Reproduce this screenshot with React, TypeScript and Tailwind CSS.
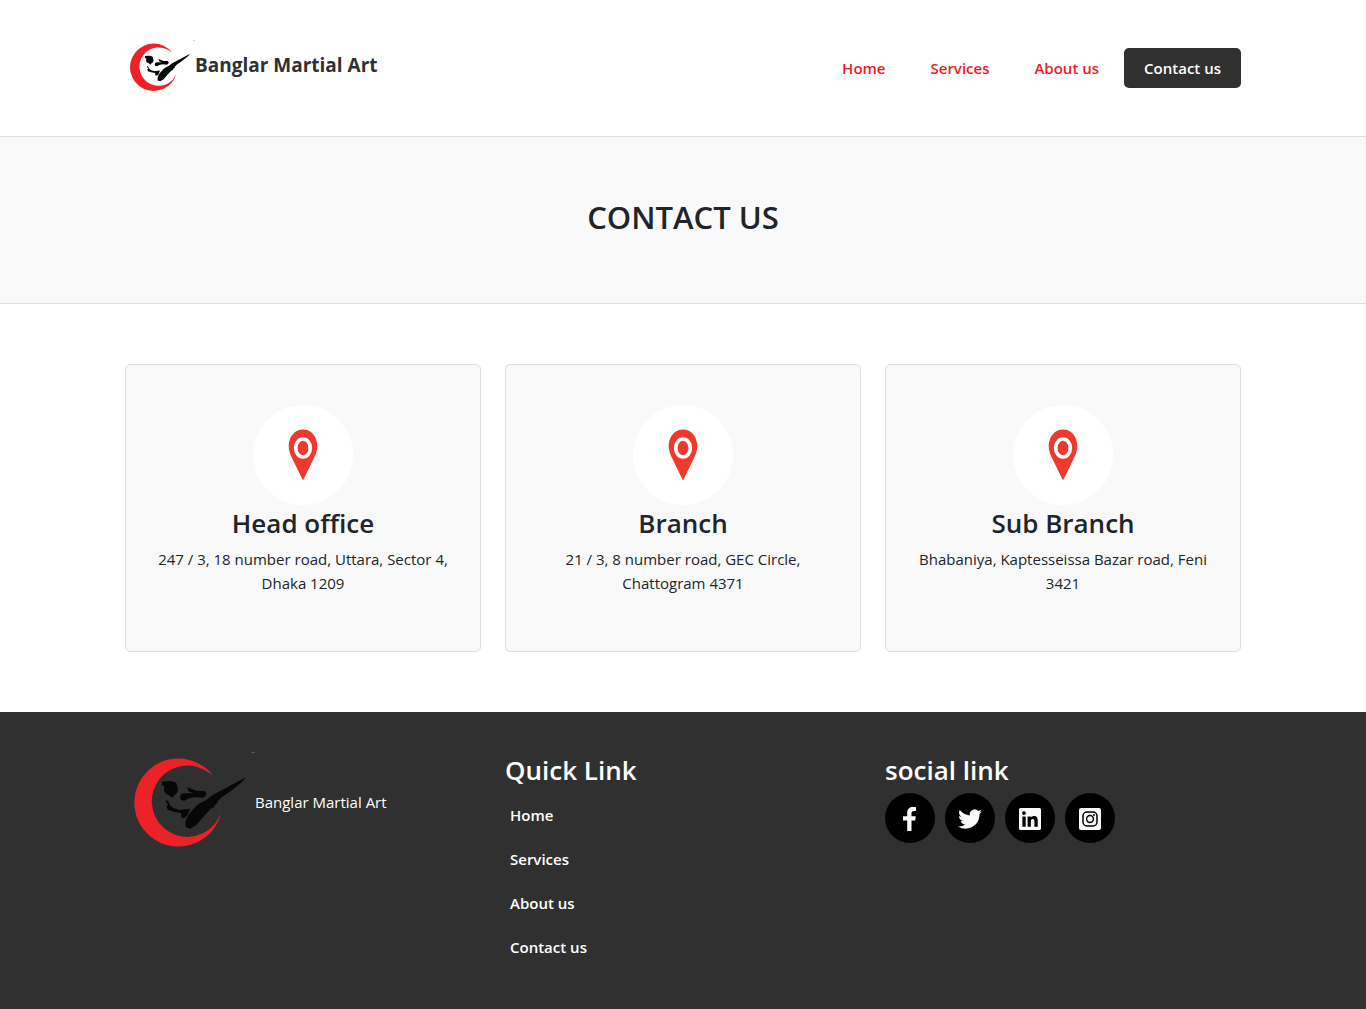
import type { ReactNode } from "react";

const navLinks = ["Home", "Services", "About us"];
const quickLinks = ["Home", "Services", "About us", "Contact us"];

const offices = [
  { name: "Head office", address: "247 / 3, 18 number road, Uttara, Sector 4, Dhaka 1209" },
  { name: "Branch", address: "21 / 3, 8 number road, GEC Circle, Chattogram 4371" },
  { name: "Sub Branch", address: "Bhabaniya, Kaptesseissa Bazar road, Feni 3421" },
];

function Logo({ className }: { className: string }) {
  return (
    <svg viewBox="0 21 390 300" className={className} aria-hidden="true">
      <path d="M263 90 A132 132 0 1 0 288 205 A107 107 0 1 1 217 66 Q243 74 263 90Z" fill="#ed2228" />
      <g fill="#050708">
        <path d="M112 110 L126 109 Q142 106 154 114 L157 123 L159 137 L154 146 L148 150 L141 159 L135 152 L124 148 L117 139 L118 124 L110 119Z" />
        <path d="M187 127 L201 132 L215 137 L238 138 L244 144 L242 152 L234 158 L209 156 L192 160 L178 167 L168 165 L165 157 L168 148 L179 145 L205 145 L190 139Z" />
        <path d="M122 164 L130 169 L135 181 L145 189 L164 195 L195 191 L190 205 L181 218 L169 218 L168 204 L146 200 L128 194 L124 183 L131 180 L124 174Z" />
        <path d="M363 97 L351 111 L323 134 L288 158 L276 171 L279 174 L268 181 L267 187 L259 190 L235 216 L214 240 L196 251 L182 246 L181 232 L188 213 L203 194 L219 178 L245 164 L263 150 L287 137 L326 116Z" />
      </g>
      <path d="M379 23H390" stroke="#777" strokeWidth="2" />
    </svg>
  );
}

function Pin() {
  return (
    <svg viewBox="0 0 30 52" className="h-[52px] w-[30px]" aria-hidden="true">
      <path d="M15 0.500 C6.500 0.500 0.700 8 0.700 17 C0.700 21 2 25 4 29 L15 51.500 L26 29 C28 25 29.300 21 29.300 17 C29.300 8 23.500 0.500 15 0.500Z" fill="#ee392f" />
      <ellipse cx="15" cy="19" rx="7.300" ry="9" fill="none" stroke="#fff" strokeWidth="3.700" />
    </svg>
  );
}

const socials: { label: string; icon: ReactNode }[] = [
  {
    label: "Facebook",
    icon: <path d="M13.500 24V13.500H17.200L17.800 9.200H13.500V6.500C13.500 5 14.100 4 16 4H18V0.300C17 0.100 16 0 15 0C11.500 0 9.200 2 9.200 5.800V9.200H5V13.500H9.200V24Z" />,
  },
  {
    label: "Twitter",
    icon: <path d="M24 4.600c-.9.400-1.800.7-2.800.8 1-.6 1.800-1.600 2.200-2.700-1 .6-2 1-3.100 1.200A4.920 4.920 0 0 0 11.900 8.400C7.800 8.200 4.100 6.200 1.700 3.100.4 5.300 1 8.200 3.200 9.700c-.8 0-1.600-.2-2.200-.6-.1 2.300 1.600 4.400 3.900 4.900-.7.200-1.500.2-2.200.1.600 2 2.400 3.400 4.600 3.400A9.900 9.900 0 0 1 0 19.500 14 14 0 0 0 7.500 21.700c9.100 0 14.300-7.700 14-14.600 1-.7 1.800-1.600 2.500-2.500Z" />,
  },
  {
    label: "LinkedIn",
    icon: (
      <path
        fillRule="evenodd"
        d="M2.500 1H21.500Q23 1 23 2.500V21.500Q23 23 21.500 23H2.500Q1 23 1 21.500V2.500Q1 1 2.500 1Z M4.400 9.400V19.700H7.700V9.400Z M6 4.200A1.900 1.900 0 1 0 6 8A1.900 1.900 0 1 0 6 4.200Z M9.600 9.400V19.700H12.900V14.600C12.900 13.200 13.300 12 14.800 12C16.300 12 16.400 13.400 16.400 14.700V19.700H19.700V14C19.700 11.200 19 9.100 15.900 9.100C14.400 9.100 13.300 9.900 12.800 10.800V9.400Z"
      />
    ),
  },
  {
    label: "Instagram",
    icon: (
      <>
        <rect x="1" y="1" width="22" height="22" rx="2" />
        <rect x="5" y="5" width="14" height="14" rx="4" fill="none" stroke="#000" strokeWidth="1.500" />
        <circle cx="12" cy="12" r="3.400" fill="none" stroke="#000" strokeWidth="1.500" />
        <circle cx="16" cy="8" r="1" fill="#000" />
      </>
    ),
  },
];

export default function App() {
  return (
    <div className="flex min-h-screen flex-col bg-white font-['Open_Sans','Noto_Sans',sans-serif] text-[15px] leading-6 text-[#212529]">
      <header className="border-b border-[#dedede]">
        <div className="mx-auto flex min-h-[136px] max-w-[1140px] flex-wrap items-center justify-between px-3">
          <a href="#" className="flex items-center pb-0.5 text-[19px] font-bold text-[#303030]">
            <Logo className="h-[54px] w-[70px]" />
            <span className="pb-1">Banglar Martial Art</span>
          </a>
          <nav className="flex flex-wrap items-center gap-[5px]">
            {navLinks.map((l) => (
              <a key={l} href="#" className="px-5 py-2 font-semibold text-[#ed1c24]">
                {l}
              </a>
            ))}
            <a href="#" className="rounded-[5px] bg-[#303030] px-5 py-2 font-semibold text-white">
              Contact us
            </a>
          </nav>
        </div>
      </header>

      <section className="border-b border-[#dedede] bg-[#f9f9f9] pt-[60px] pb-[66px] text-center">
        <h1 className="text-[31px] leading-[40px] font-semibold">CONTACT US</h1>
      </section>

      <main className="mx-auto grid w-full max-w-[1140px] grid-cols-1 gap-6 px-3 py-[60px] md:grid-cols-3">
        {offices.map((o) => (
          <article key={o.name} className="rounded-[5px] border border-[#dedede] bg-[#f9f9f9] px-6 pt-10 pb-14 text-center">
            <div className="mx-auto flex size-[100px] items-center justify-center rounded-full bg-white">
              <Pin />
            </div>
            <h2 className="mb-1.5 text-[26px] leading-9 font-semibold">{o.name}</h2>
            <p>{o.address}</p>
          </article>
        ))}
      </main>

      <footer className="grow bg-[#303030] text-white">
        <div className="mx-auto grid max-w-[1140px] grid-cols-1 gap-6 px-3 py-10 md:grid-cols-3">
          <a href="#" className="flex items-center self-start">
            <Logo className="h-[100px] w-[130px]" />
            <span>Banglar Martial Art</span>
          </a>
          <div>
            <h2 className="mb-[5px] text-[26px] leading-9 font-semibold">Quick Link</h2>
            <ul>
              {quickLinks.map((l) => (
                <li key={l}>
                  <a href="#" className="block px-[5px] py-[10px] font-semibold">
                    {l}
                  </a>
                </li>
              ))}
            </ul>
          </div>
          <div>
            <h2 className="mb-[5px] text-[26px] leading-9 font-semibold">social link</h2>
            <div className="flex gap-[10px]">
              {socials.map((s) => (
                <a key={s.label} href="#" aria-label={s.label} className="flex size-[50px] items-center justify-center rounded-full bg-black pt-0.5">
                  <svg viewBox="0 0 24 24" className="size-6" fill="#fafafa" aria-hidden="true">
                    {s.icon}
                  </svg>
                </a>
              ))}
            </div>
          </div>
        </div>
      </footer>
    </div>
  );
}
